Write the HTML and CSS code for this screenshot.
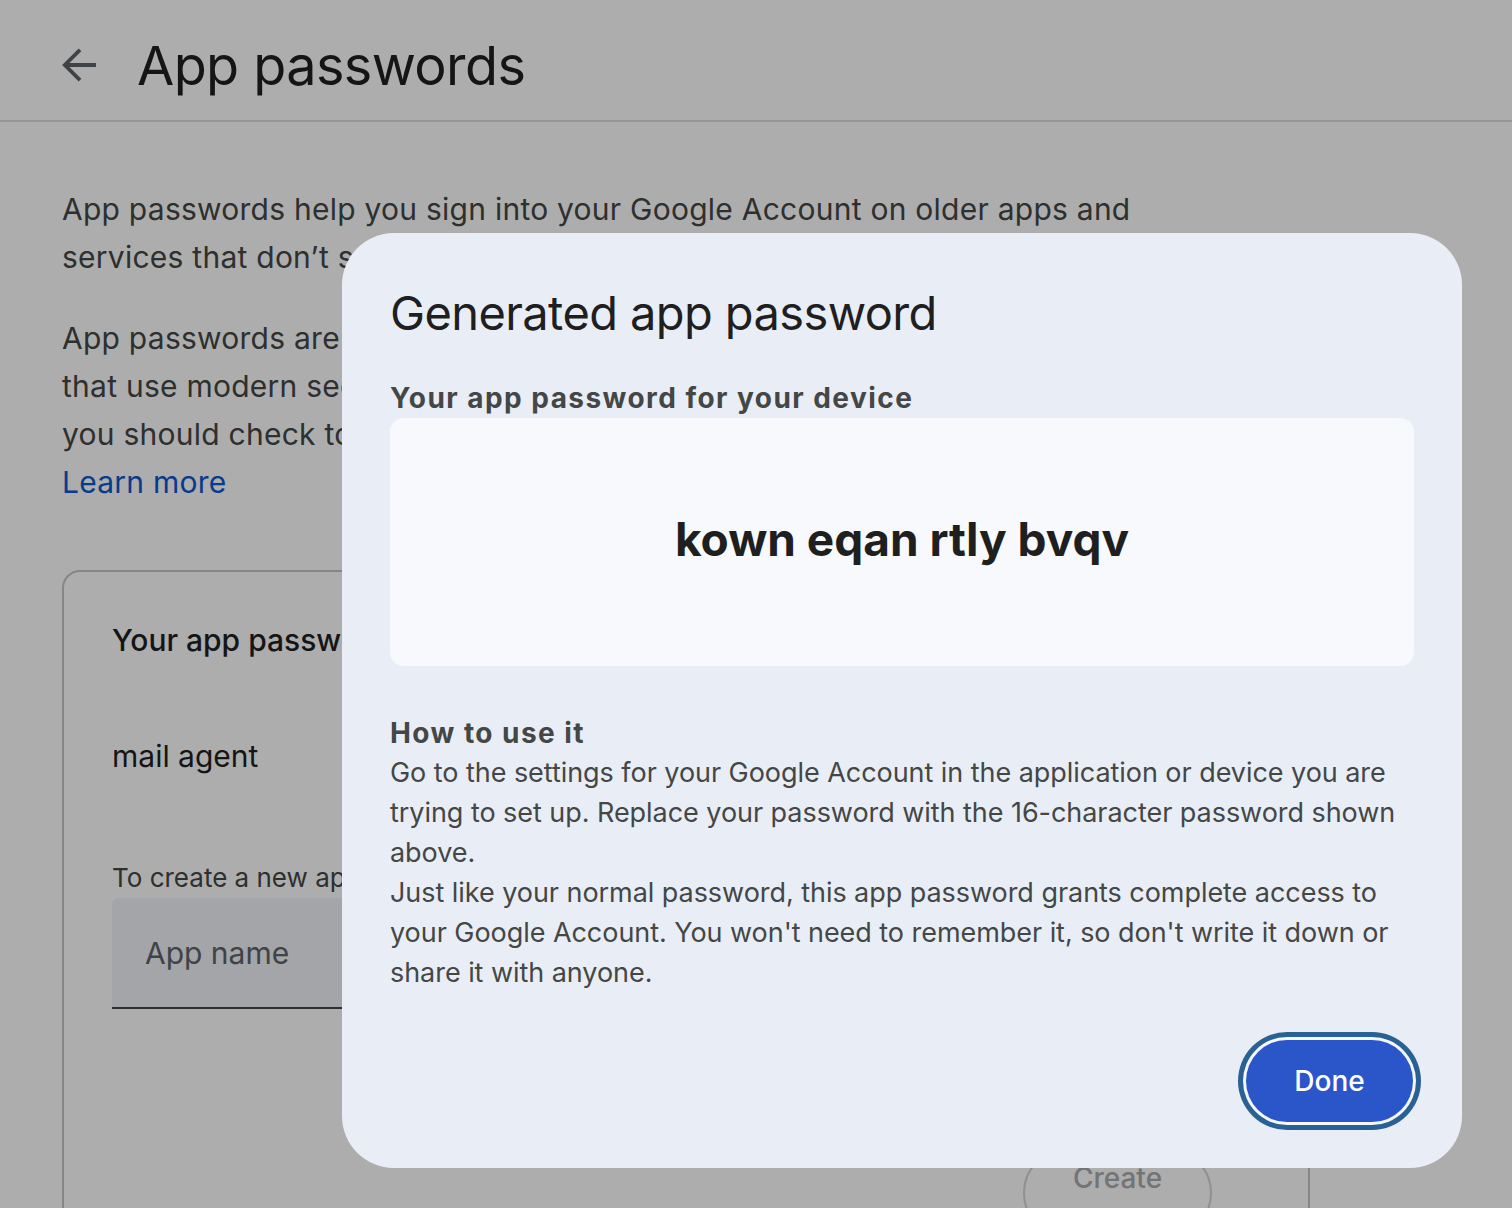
FILE: index.html
```html
<!DOCTYPE html>
<html lang="en">
<head>
<meta charset="utf-8">
<title>App passwords</title>
<link rel="stylesheet" href="styles.css">
</head>
<body>
<header class="topbar">
  <button class="back" aria-label="Back">
    <svg width="48" height="48" viewBox="0 0 24 24"><path d="M20 12H4.8M12 4.4L4.4 12l7.6 7.6" fill="none" stroke="#5f6368" stroke-width="1.9"/></svg>
  </button>
  <h1 class="page-title">App passwords</h1>
</header>
<main class="content">
  <p class="intro">App passwords help you sign into your Google Account on older apps and services that don’t support modern security standards.</p>
  <p class="intro">App passwords are less secure than using up-to-date apps and services that use modern security standards. Before you create an app password, you should check to see if your app needs this in order to sign in.<br><a class="link" href="#">Learn more</a></p>
  <section class="card">
    <h2 class="card-title">Your app passwords</h2>
    <div class="app-row">mail agent</div>
    <div class="create-label">To create a new app specific password, type a name for it below...</div>
    <div class="field"><span class="placeholder">App name</span></div>
    <div class="create-row"><button class="create">Create</button></div>
  </section>
</main>
<div class="scrim"></div>
<div class="dialog" role="dialog">
  <h2 class="dialog-title">Generated app password</h2>
  <div class="dialog-sub">Your app password for your device</div>
  <div class="pw-box"><span class="pw">kown eqan rtly bvqv</span></div>
  <div class="howto">
    <div class="howto-title">How to use it</div>
    <p class="howto-text">Go to the settings for your Google Account in the application or device you are trying to set up. Replace your password with the 16-character password shown above.</p>
    <p class="howto-text">Just like your normal password, this app password grants complete access to your Google Account. You won't need to remember it, so don't write it down or share it with anyone.</p>
  </div>
  <div class="actions"><button class="done">Done</button></div>
</div>
</body>
</html>
```
FILE: styles.css
```css
html, body {
  margin: 0;
  padding: 0;
  background: #ffffff;
  font-family: Inter, Roboto, "Noto Sans", sans-serif;
  color: #1f1f1f;
  height: 1208px;
  overflow: hidden;
}

.topbar {
  display: flex;
  align-items: center;
  box-sizing: border-box;
  height: 122px;
  padding-left: 56px;
  padding-top: 10px;
  border-bottom: 2px solid #dadce0;
}

.back {
  width: 48px;
  height: 48px;
  padding: 0;
  border: 0;
  background: none;
  display: flex;
  align-items: center;
  justify-content: center;
}

.page-title {
  margin: 0 0 0 33px;
  font-family: Inter, Roboto, sans-serif;
  font-weight: 400;
  font-size: 54px;
  letter-spacing: -0.6px;
  color: #1f1f1f;
}

.content {
  width: 1248px;
  padding-left: 62px;
  padding-top: 63px;
}

.intro {
  margin: 0 0 33px;
  max-width: 1100px;
  font-size: 30px;
  letter-spacing: 0.25px;
  line-height: 48px;
  color: #444746;
}

.link {
  color: #0b57d0;
  text-decoration: none;
}

.card {
  margin-top: 64px;
  border: 2px solid #c4c7c5;
  border-radius: 18px;
  padding: 44px 96px 0 48px;
  height: 700px;
}

.card-title {
  margin: 0;
  font-size: 30px;
  font-weight: 500;
  line-height: 48px;
  color: #1f1f1f;
}

.app-row {
  margin-top: 68px;
  font-size: 30px;
  line-height: 48px;
  color: #1f1f1f;
}

.create-label {
  margin-top: 80px;
  font-size: 26px;
  line-height: 36px;
  color: #444746;
}

.field {
  margin-top: 2px;
  height: 109px;
  background: #f0f4f9;
  border-bottom: 2px solid #444746;
  border-radius: 6px 6px 0 0;
  display: flex;
  align-items: center;
  padding-left: 33px;
  width: 700px;
}

.placeholder {
  font-size: 30px;
  color: #5f6368;
}

.create-row {
  display: flex;
  justify-content: flex-end;
  margin-top: 139px;
}

.create {
  width: 189px;
  height: 90px;
  border: 2px solid #d3d5d6;
  border-radius: 45px;
  background: none;
  font-family: Inter, Roboto, sans-serif;
  font-size: 28px;
  font-weight: 500;
  color: #a8abae;
  padding: 0 0 30px;
}

.scrim {
  position: fixed;
  inset: 0;
  background: rgba(0, 0, 0, 0.32);
}

.dialog {
  position: fixed;
  left: 342px;
  top: 233px;
  width: 1120px;
  height: 935px;
  box-sizing: border-box;
  background: #e9eef6;
  border-radius: 52px;
  padding: 52px 48px 0 48px;
  display: flex;
  flex-direction: column;
}

.dialog-title {
  margin: 0;
  font-family: Inter, Roboto, sans-serif;
  font-weight: 400;
  font-size: 47px;
  line-height: 56px;
  letter-spacing: -0.6px;
  color: #1f1f1f;
}

.dialog-sub {
  margin-top: 41px;
  font-size: 28px;
  line-height: 32px;
  font-weight: 700;
  letter-spacing: 1.45px;
  color: #444746;
}

.pw-box {
  margin-top: 4px;
  height: 248px;
  background: #f7f9fc;
  border-radius: 14px;
  display: flex;
  align-items: center;
  justify-content: center;
  padding-bottom: 6px;
  box-sizing: border-box;
}

.pw {
  font-family: Inter, Roboto, sans-serif;
  font-weight: 700;
  font-size: 46px;
  color: #1f1f1f;
}

.howto {
  margin-top: 51px;
}

.howto-title {
  font-size: 28px;
  font-weight: 700;
  line-height: 32px;
  letter-spacing: 1.45px;
  color: #444746;
}

.howto-text {
  margin: 0;
  font-size: 27px;
  letter-spacing: -0.05px;
  line-height: 40px;
  color: #444746;
}

.howto-title + .howto-text {
  margin-top: 4px;
}

.actions {
  margin-top: auto;
  margin-bottom: 46px;
  display: flex;
  justify-content: flex-end;
}

.done {
  width: 167px;
  height: 82px;
  margin-right: 1px;
  border: 0;
  border-radius: 41px;
  background: #2a56c9;
  color: #ffffff;
  font-family: Inter, Roboto, sans-serif;
  font-size: 28px;
  font-weight: 500;
  box-shadow: 0 0 0 3px #f4f7fb, 0 0 0 8px #2a6194;
}
```
